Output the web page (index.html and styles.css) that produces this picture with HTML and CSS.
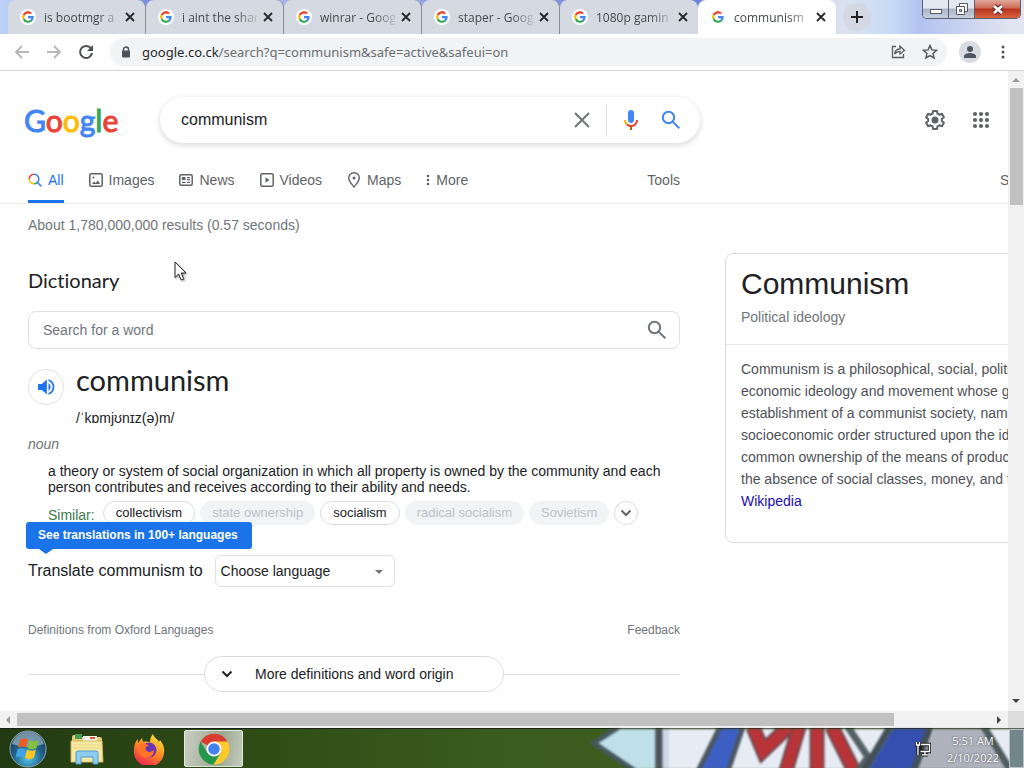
FILE: index.html
```html
<!DOCTYPE html>
<html lang="en">
<head>
    <meta charset="UTF-8">
    <meta name="viewport" content="width=device-width, initial-scale=1.0">
    <title>communism - Google Search</title>
    <link rel="stylesheet" href="styles.css">
</head>
<body>
    <!-- shared icons -->
    <svg class="defs" width="0" height="0" aria-hidden="true">
        <symbol id="g" viewBox="0 0 48 48">
            <path fill="#ea4335" d="M24 9.5c3.5 0 6.700 1.200 9.200 3.600l6.900-6.900C35.900 2.400 30.500 0 24 0 14.600 0 6.500 5.400 2.600 13.200l8 6.200C12.400 13.700 17.700 9.500 24 9.500z"/>
            <path fill="#4285f4" d="M47 24.500c0-1.600-.2-3.100-.4-4.500H24v9h12.900c-.6 3-2.200 5.500-4.700 7.200l7.700 6C44.400 38 47 31.800 47 24.500z"/>
            <path fill="#fbbc05" d="M10.500 28.600c-.5-1.500-.8-3-.8-4.600s.3-3.100.8-4.600l-8-6.200C.9 16.500 0 20.100 0 24s.9 7.500 2.600 10.800l7.900-6.200z"/>
            <path fill="#34a853" d="M24 48c6.500 0 11.900-2.100 15.900-5.800l-7.700-6c-2.200 1.500-4.900 2.300-8.200 2.300-6.300 0-11.600-4.200-13.500-9.900l-8 6.200C6.500 42.600 14.600 48 24 48z"/>
        </symbol>
        <symbol id="x" viewBox="0 0 10 10"><path d="M1 1l8 8M9 1L1 9" stroke="currentColor" stroke-width="1.800"/></symbol>
        <symbol id="search" viewBox="0 0 24 24"><g fill="none" stroke="currentColor" stroke-width="2"><circle cx="9.500" cy="9.500" r="5.700"/><path d="M13.600 13.600l6.700 6.700"/></g></symbol>
        <symbol id="chevron" viewBox="0 0 12 12"><path d="M1.500 3.500L6 8l4.500-4.500" fill="none" stroke="currentColor" stroke-width="2"/></symbol>
    </svg>

    <div class="tabstrip">
        <div class="tabs">
            <div class="tab"><svg class="favicon"><use href="#g"/></svg><span class="tab-title">is bootmgr a</span><button class="tab-close" aria-label="Close tab"><svg><use href="#x"/></svg></button></div>
            <div class="tab"><svg class="favicon"><use href="#g"/></svg><span class="tab-title">i aint the shar</span><button class="tab-close" aria-label="Close tab"><svg><use href="#x"/></svg></button></div>
            <div class="tab"><svg class="favicon"><use href="#g"/></svg><span class="tab-title">winrar - Goog</span><button class="tab-close" aria-label="Close tab"><svg><use href="#x"/></svg></button></div>
            <div class="tab"><svg class="favicon"><use href="#g"/></svg><span class="tab-title">staper - Goog</span><button class="tab-close" aria-label="Close tab"><svg><use href="#x"/></svg></button></div>
            <div class="tab"><svg class="favicon"><use href="#g"/></svg><span class="tab-title">1080p gamin</span><button class="tab-close" aria-label="Close tab"><svg><use href="#x"/></svg></button></div>
            <div class="tab active"><svg class="favicon"><use href="#g"/></svg><span class="tab-title">communism</span><button class="tab-close" aria-label="Close tab"><svg><use href="#x"/></svg></button></div>
        </div>
        <button class="new-tab" aria-label="New tab"><svg width="12" height="12" viewBox="0 0 12 12"><path d="M6 0v12M0 6h12" stroke="#222" stroke-width="2"/></svg></button>
        <div class="window-buttons">
            <button class="win-btn" aria-label="Minimize"><svg width="14" height="14" viewBox="0 0 14 14"><rect x="1.500" y="7.500" width="11" height="4" fill="#fff" stroke="#555a66"/></svg></button>
            <button class="win-btn" aria-label="Restore"><svg width="14" height="14" viewBox="0 0 14 14" fill="#fff" stroke="#555a66"><path d="M4.500 1.500h8v8h-8z"/><path d="M1.500 4.500h8v8h-8z"/><path d="M4.500 7.500h2v2h-2z" fill="#bcc"/></svg></button>
            <button class="win-btn close" aria-label="Close"><svg width="14" height="14" viewBox="0 0 14 14"><path d="M3 4l8 7M11 4l-8 7" stroke="#6b3038" stroke-width="5"/><path d="M3 4l8 7M11 4l-8 7" stroke="#fff" stroke-width="2.500"/></svg></button>
        </div>
    </div>

    <div class="toolbar">
        <button class="tool" aria-label="Back"><svg width="16" height="16" viewBox="0 0 16 16"><path d="M15 8H2M8 2L2 8l6 6" fill="none" stroke="#b4b6b9" stroke-width="1.800"/></svg></button>
        <button class="tool" aria-label="Forward"><svg width="16" height="16" viewBox="0 0 16 16"><path d="M1 8h13M8 2l6 6-6 6" fill="none" stroke="#b4b6b9" stroke-width="1.800"/></svg></button>
        <button class="tool" aria-label="Reload"><svg width="16" height="16" viewBox="0 0 16 16"><path d="M13 4.500A6 6 0 1 0 14 9" fill="none" stroke="#4a4d51" stroke-width="2"/><path d="M15 1v6H9z" fill="#4a4d51"/></svg></button>
        <div class="omnibox">
            <svg width="10" height="12" viewBox="0 0 10 12"><path d="M2.500 5V3.500a2.500 2.500 0 0 1 5 0V5" fill="none" stroke="#4f5358" stroke-width="1.500"/><rect x="1" y="4.500" width="8" height="7" rx="1" fill="#4f5358"/></svg>
            <span class="url"><span class="host">google.co.ck</span>/search?q=communism&amp;safe=active&amp;safeui=on</span>
            <svg width="16" height="16" viewBox="0 0 16 16" fill="none" stroke="#5a5e63" stroke-width="1.300"><path d="M6 2.500H2.500v11h11V10"/><path d="M4.500 10c.5-3.500 2.500-5 5.500-5V2l4.500 4.500L10 10V7.500C7.500 7.500 6 8 4.500 10z"/></svg>
            <svg class="star" width="16" height="16" viewBox="0 0 16 16"><path d="M8 1.500l1.900 4.400 4.700.4-3.600 3.100 1.100 4.700L8 11.600l-4.100 2.500L5 9.400 1.400 6.300l4.700-.4z" fill="none" stroke="#4f5358" stroke-width="1.400"/></svg>
        </div>
        <button class="profile" aria-label="Profile"><svg width="14" height="14" viewBox="0 0 14 14" fill="#4b5563"><circle cx="7" cy="4" r="3"/><path d="M1 13v-2c0-2 4-3 6-3s6 1 6 3v2z"/></svg></button>
        <button class="menu" aria-label="Menu"><svg width="4" height="14" viewBox="0 0 4 14" fill="#4f5358"><circle cx="2" cy="2" r="1.500"/><circle cx="2" cy="7" r="1.500"/><circle cx="2" cy="12" r="1.500"/></svg></button>
    </div>

    <div class="viewport">
        <div class="page">
            <header class="header">
                <a class="logo" href="#" aria-label="Google"><span class="blue">G</span><span class="red">o</span><span class="yellow">o</span><span class="blue">g</span><span class="green">l</span><span class="red">e</span></a>
                <form class="searchbox">
                    <input type="text" aria-label="Search" value="communism">
                    <button type="button" aria-label="Clear"><svg width="16" height="16" viewBox="0 0 16 16"><path d="M1 1l14 14M15 1L1 15" stroke="#70757a" stroke-width="2"/></svg></button>
                    <span class="divider"></span>
                    <button type="button" class="mic" aria-label="Search by voice"><svg width="24" height="24" viewBox="0 0 24 24"><path fill="#4285f4" d="M12 15c1.700 0 3-1.300 3-3V5c0-1.700-1.300-3-3-3S9 3.300 9 5v7c0 1.700 1.300 3 3 3z"/><path fill="#b06000" d="M11 18.900h2V22h-2z"/><path fill="#f4b400" d="M7 12H5c0 1.900.8 3.700 2.100 5l1.400-1.400C7.600 14.700 7 13.400 7 12z"/><path fill="#ea4335" d="M12 17c-1.400 0-2.600-.5-3.500-1.400L7.100 17c1.200 1.300 3 2.100 4.900 2.100 3.900 0 7-3.200 7-7.100h-2c0 2.700-2.200 5-5 5z"/></svg></button>
                    <button type="button" aria-label="Google Search" class="go"><svg width="24" height="24"><use href="#search"/></svg></button>
                </form>
                <div class="header-right">
                    <button aria-label="Settings"><svg width="24" height="24" viewBox="0 0 24 24"><path d="M10 3h4l.5 2.700 1.800 1 2.600-.9 2 3.400-2.100 1.800v2l2.100 1.800-2 3.500-2.600-1-1.800 1-.5 2.700h-4l-.5-2.700-1.800-1-2.600 1-2-3.500 2.100-1.800v-2L3.100 9.200l2-3.400 2.600.9 1.800-1z" fill="none" stroke="#5f6368" stroke-width="2" stroke-linejoin="round"/><circle cx="12" cy="12" r="3.500" fill="#5f6368"/></svg></button>
                    <button aria-label="Google apps"><svg width="18" height="18" viewBox="0 0 18 18" fill="#5f6368"><circle cx="3" cy="3" r="2.100"/><circle cx="9" cy="3" r="2.100"/><circle cx="15" cy="3" r="2.100"/><circle cx="3" cy="9" r="2.100"/><circle cx="9" cy="9" r="2.100"/><circle cx="15" cy="9" r="2.100"/><circle cx="3" cy="15" r="2.100"/><circle cx="9" cy="15" r="2.100"/><circle cx="15" cy="15" r="2.100"/></svg></button>
                </div>
            </header>

            <nav class="nav">
                <div class="nav-main">
                    <a class="selected" href="#"><svg width="14" height="14" viewBox="0 0 14 14" fill="none" stroke-width="1.500"><path d="M1.200 6A4.800 4.800 0 0 1 6 1.200" stroke="#ea4335"/><path d="M6 10.800A4.800 4.800 0 0 1 1.200 6" stroke="#fbbc05"/><path d="M9.400 9.400A4.800 4.800 0 0 1 6 10.800" stroke="#34a853"/><path d="M6 1.200A4.800 4.800 0 0 1 9.400 9.400L13.400 13.400" stroke="#4285f4"/></svg>All</a>
                    <a href="#"><svg width="14" height="14" viewBox="0 0 14 14"><rect x=".8" y=".8" width="12.400" height="12.400" rx="1.500" fill="none" stroke="#5f6368" stroke-width="1.500"/><path d="M3 11l2-2.500L6.500 10 9 7.500l2 3.500z" fill="#5f6368"/><circle cx="4.500" cy="4.500" r="1" fill="#5f6368"/></svg>Images</a>
                    <a href="#"><svg width="14" height="14" viewBox="0 0 14 14"><rect x=".8" y="1.800" width="12.400" height="10.400" rx="1.500" fill="none" stroke="#5f6368" stroke-width="1.500"/><path d="M3 4h3.500v3H3zM8 4h3v1.200H8zM8 6h3v1.200H8zM3 8.700h3.500v1.200H3zM8 8.700h3v1.200H8z" fill="#5f6368"/></svg>News</a>
                    <a href="#"><svg width="14" height="14" viewBox="0 0 14 14"><rect x=".8" y=".8" width="12.400" height="12.400" rx="1.500" fill="none" stroke="#5f6368" stroke-width="1.500"/><path d="M5.500 4.300v5.400L9.500 7z" fill="#5f6368"/></svg>Videos</a>
                    <a href="#"><svg width="14" height="16" viewBox="0 0 14 16"><path d="M7 15C4 11 1.700 9 1.700 6a5.300 5.300 0 0 1 10.600 0c0 3-2.300 5-5.300 9z" fill="none" stroke="#5f6368" stroke-width="1.400"/><circle cx="7" cy="6" r="1.500" fill="#5f6368"/></svg>Maps</a>
                    <a href="#"><svg width="4" height="12" viewBox="0 0 4 12" fill="#5f6368"><circle cx="2" cy="2" r="1.300"/><circle cx="2" cy="6" r="1.300"/><circle cx="2" cy="10" r="1.300"/></svg>More</a>
                    <a class="tools" href="#">Tools</a>
                </div>
                <a href="#">SafeSearch on</a>
            </nav>

            <p class="stats">About 1,780,000,000 results (0.57 seconds)</p>

            <div class="results">
                <main class="dictionary">
                    <h2>Dictionary</h2>
                    <div class="word-search">
                        <input type="text" aria-label="Search for a word" placeholder="Search for a word">
                        <svg width="24" height="24"><use href="#search"/></svg>
                    </div>
                    <div class="word-row">
                        <button class="speaker" aria-label="Listen"><svg width="20" height="20" viewBox="0 0 24 24" fill="#1a73e8"><path d="M2.500 8.500v7H7l6 5.500V3L7 8.500z"/><path d="M15 7.500v9c1.500-.8 2.500-2.500 2.500-4.500S16.500 8.300 15 7.500z"/><path d="M15 2.700v2.200c3 .9 5 3.700 5 7.100s-2 6.200-5 7.100v2.200c4-.9 7-4.700 7-9.300s-3-8.400-7-9.300z"/></svg></button>
                        <div>
                            <h1>communism</h1>
                            <p class="ipa">/ˈkɒmjʊnɪz(ə)m/</p>
                        </div>
                    </div>
                    <p class="pos">noun</p>
                    <div class="sense">
                        <p>a theory or system of social organization in which all property is owned by the community and each person contributes and receives according to their ability and needs.</p>
                        <div class="similar">
                            <span class="similar-label">Similar:</span>
                            <a class="chip" href="#">collectivism</a>
                            <span class="chip off">state ownership</span>
                            <a class="chip" href="#">socialism</a>
                            <span class="chip off">radical socialism</span>
                            <span class="chip off">Sovietism</span>
                            <button class="expand" aria-label="More synonyms"><svg width="12" height="12"><use href="#chevron"/></svg></button>
                        </div>
                    </div>
                    <div class="translate">
                        <div class="tooltip">See translations in 100+ languages</div>
                        <label for="language">Translate communism to</label>
                        <div class="select">
                            <select id="language"><option>Choose language</option></select>
                            <svg width="8" height="4" viewBox="0 0 8 4"><path d="M0 0h8L4 4z" fill="#70757a"/></svg>
                        </div>
                    </div>
                    <div class="source"><a href="#">Definitions from Oxford Languages</a><a href="#">Feedback</a></div>
                    <div class="more">
                        <button><svg width="12" height="12"><use href="#chevron"/></svg>More definitions and word origin</button>
                    </div>
                </main>

                <aside class="panel">
                    <div class="panel-head">
                        <h2>Communism</h2>
                        <p>Political ideology</p>
                    </div>
                    <p class="panel-text">Communism is a philosophical, social, political, and<br>economic ideology and movement whose goal is the<br>establishment of a communist society, namely a<br>socioeconomic order structured upon the ideas of<br>common ownership of the means of production and<br>the absence of social classes, money, and the state.<br><a href="#">Wikipedia</a></p>
                </aside>
            </div>
        </div>
        <div class="vscroll">
            <svg width="8" height="5" viewBox="0 0 8 5"><path d="M4 0l4 4H0z" fill="#999"/></svg>
            <div class="vthumb"></div>
            <svg width="8" height="5" viewBox="0 0 8 5"><path d="M0 0h8L4 4z" fill="#444"/></svg>
        </div>
    </div>
    <div class="hscroll">
        <svg width="5" height="8" viewBox="0 0 5 8"><path d="M4 0v8L0 4z" fill="#999"/></svg>
        <div class="htrack"><div class="hthumb"></div></div>
        <svg width="5" height="8" viewBox="0 0 5 8"><path d="M0 0v8l4-4z" fill="#444"/></svg>
        <div class="corner"></div>
    </div>

    <footer class="taskbar">
        <svg class="wallpaper" width="440" height="40" viewBox="584 0 440 40" aria-hidden="true">
            <path d="M650 0h374v40H650z" fill="#e6ebf4"/>
            <path d="M594 14L622 -4h36v48h-20z" fill="#bfdfe9" stroke="#465760" stroke-width="5"/>
            <path d="M659 -2v44" stroke="#4d555c" stroke-width="7"/>
            <path d="M663 0l6 0v40h-6z" fill="#cdd8e6"/>
            <path d="M722 -2h21l-16 44h-27z" fill="#3d5fc4"/>
            <path d="M720 -2l-22 44M743 -2l-15 44" fill="none" stroke="#4b5660" stroke-width="5"/>
            <path d="M753 -2l10 24L788 -2M799 -2l-13 44M817 -2v44M832 -2l22 44" fill="none" stroke="#6b4951" stroke-width="15"/>
            <path d="M753 -2l10 24L788 -2M799 -2l-13 44M817 -2v44M832 -2l22 44" fill="none" stroke="#b93438" stroke-width="11"/>
            <path d="M848 -2l20 30-10 14" fill="none" stroke="#536166" stroke-width="7"/>
            <path d="M894 -2h36l-18 44h-44z" fill="#354fae"/>
            <path d="M890 -2l-26 44M930 -2l-16 44" stroke="#435057" stroke-width="7"/>
            <path d="M934 0h50l25 40h-91z" fill="#adb2bd"/>
            <path d="M984 -2l27 44" stroke="#4d5c5e" stroke-width="7"/>
        </svg>
        <button class="task start" aria-label="Start">
            <svg width="40" height="38" viewBox="0 0 40 38"><defs><radialGradient id="orb" cx=".5" cy=".75" r=".75"><stop offset="0" stop-color="#55c9ea"/><stop offset=".5" stop-color="#23648f"/><stop offset="1" stop-color="#16324b"/></radialGradient></defs><circle cx="20" cy="19" r="18" fill="url(#orb)" stroke="#8ca9b4"/><path d="M4 14a16.500 16.500 0 0 1 32 0q-16 6-32 0z" fill="#b9d5df" opacity=".55"/><path d="M12 10q4-3 8-.5l-2 8q-4-2-8 .5z" fill="#ee5b24"/><path d="M21.500 10q5 2.500 9 0l-2 8q-4 2.500-9 0z" fill="#85bf3b"/><path d="M9.500 19.500q4-2.500 8 0l-2 8q-4-2-8 0z" fill="#3ea4e5"/><path d="M19 19.500q5 2.500 9 0l-2 8q-4 3-9 .5z" fill="#fcc624"/></svg>
        </button>
        <button class="task" aria-label="Windows Explorer">
            <svg width="34" height="32" viewBox="0 0 34 32"><path d="M2 4q0-2 2-2h6l2 2h18q2 0 2 2v23H2z" fill="#e8cd73"/><path d="M5 1h7v5H5z" fill="#4b9a54"/><path d="M13 3h14v5H13z" fill="#f4f4ec"/><path d="M20 4h5v2h-5z" fill="#d05a45"/><path d="M1 8h31l1 21H1z" fill="#f6e9a4" stroke="#d3b75f"/><path d="M3 12h28M3 15h28" stroke="#e9d583"/><path d="M6 31V20q0-2 2-2h18q2 0 2 2v11h-5v-7H11v7z" fill="#8fcdf0" stroke="#4b9bcf"/></svg>
        </button>
        <button class="task" aria-label="Firefox">
            <svg width="32" height="32" viewBox="0 0 32 32"><defs><linearGradient id="fox" x1=".8" y1="0" x2=".3" y2="1"><stop offset="0" stop-color="#ffe93f"/><stop offset=".5" stop-color="#ff8a1f"/><stop offset="1" stop-color="#ee2255"/></linearGradient></defs><path d="M20 1c1 4 5 5 6 8l1-2c3 4 5 8 4 13A15 15 0 0 1 1 17c0-5 1-8 4-11v4l4-5 1 4c4-1 5 0 7 0 0-3 1-6 3-8z" fill="url(#fox)"/><circle cx="16" cy="17" r="7.500" fill="#6a35b5"/><path d="M5 12c4-3 8-2 11 1-3 0-4 2-3 4 2 3 6 2 8 0 0 6-5 9-10 7-5-1-7-6-6-12z" fill="#ff7428"/></svg>
        </button>
        <button class="task current" aria-label="Google Chrome">
            <svg width="32" height="32" viewBox="0 0 32 32"><path d="M16 16L2.600 8.500A15.500 15.500 0 0 1 29.500 8.500z" fill="#d93c30"/><path d="M16 8.500h13.500A15.500 15.500 0 0 1 15.500 31.500L22.500 20z" fill="#fdc92f"/><path d="M2.600 8.500A15.500 15.500 0 0 0 15.500 31.500L22.500 20H16L9.500 20z" fill="#26964d"/><circle cx="16" cy="16" r="7.500" fill="#fff"/><circle cx="16" cy="16" r="5.800" fill="#4480ee"/></svg>
        </button>
        <div class="tray">
            <svg width="16" height="16" viewBox="0 0 16 16" fill="none"><path d="M6 3.500h8.500v7H5.500zM10 10.500v3M7 13.800h6M1.500 1v3h3V1M3 4v10" stroke="#222" stroke-width="3.500"/><path d="M6 3.500h8.500v7H5.500M10 10.500v3M7 13.800h6M1.500 1v3h3V1M3 4v10" stroke="#fff" stroke-width="1.300"/></svg>
            <div class="clock">5:51 AM<br>2/10/2022</div>
            <button class="show-desktop" aria-label="Show desktop"></button>
        </div>
    </footer>

    <svg class="cursor" width="14" height="20" viewBox="0 0 14 20" aria-hidden="true"><path d="M1 1v15.500l3.600-3.500 2.600 6 2.600-1.100L7.200 12H12z" fill="#fff" stroke="#222"/></svg>
</body>
</html>
```
FILE: styles.css
```css
* {
    box-sizing: border-box;
}
body {
    margin: 0;
    height: 100vh;
    display: flex;
    flex-direction: column;
    overflow: hidden;
    font-family: "Liberation Sans", Arial, sans-serif;
    font-size: 14px;
    color: #202124;
    background-color: #fff;
}
h1, h2, p {
    margin: 0;
    font-weight: normal;
}
a {
    color: inherit;
    text-decoration: none;
}
button {
    display: flex;
    align-items: center;
    justify-content: center;
    padding: 0;
    border: none;
    background: none;
    font: inherit;
    color: inherit;
}
input, select {
    font: inherit;
    color: inherit;
    border: none;
    outline: none;
    background: none;
}
svg {
    display: block;
    flex: none;
}
.defs {
    position: absolute;
}

/* tab strip */
.tabstrip {
    display: flex;
    align-items: flex-start;
    height: 34px;
    padding-left: 8px;
    background: linear-gradient(90deg, #bcd3f6 0, #7b8fe0 146px, #a9b6ea 290px, #6f7fdc 700px, #dce1ef 840px, #c8dcf5 890px, #b3c3f0 920px, #dfe4f0 1010px);
    font-family: "Open Sans", "Noto Sans", sans-serif;
    font-size: 12px;
    color: #45484e;
}
.tabs {
    display: flex;
}
.tab {
    display: flex;
    align-items: center;
    width: 138px;
    height: 34px;
    padding: 0 10px 0 12px;
    background-color: #d5d9e2;
    border-radius: 8px 8px 0 0;
    border-right: 1px solid #8a8e98;
}
.tab:nth-child(5) {
    border-right: none;
}
.tab.active {
    background-color: #fff;
    border-right: none;
}
.favicon {
    width: 16px;
    height: 16px;
    padding: 2px;
    border-radius: 8px;
    background-color: #fff;
}
.tab-title {
    flex: 1;
    min-width: 0;
    margin-left: 8px;
    overflow: hidden;
    white-space: nowrap;
    -webkit-mask-image: linear-gradient(90deg, #000 72%, transparent 105%);
    mask-image: linear-gradient(90deg, #000 72%, transparent 105%);
}
.tab-close {
    width: 10px;
    height: 16px;
    margin-left: 6px;
    color: #26282c;
}
.tab-close svg {
    width: 10px;
    height: 10px;
}
.new-tab {
    width: 28px;
    height: 28px;
    margin: 3px 0 0 7px;
    border-radius: 14px;
    background-color: #d3d8e2;
}
.window-buttons {
    display: flex;
    margin: 0 3px 0 auto;
    border: 1px solid #5b616e;
    border-top: none;
    border-radius: 0 0 5px 5px;
    overflow: hidden;
}
.win-btn {
    width: 26px;
    height: 18px;
    background: linear-gradient(#e4e8f0 45%, #aab2c6 50%, #c9d0e0);
    border-right: 1px solid #5b616e;
}
.win-btn.close {
    width: 45px;
    background: linear-gradient(#e0a79a 0, #cd6b55 45%, #b8321b 50%, #d8653f);
    border-right: none;
}

/* toolbar */
.toolbar {
    display: flex;
    align-items: center;
    height: 37px;
    padding: 0 19px 0 14px;
    border-bottom: 1px solid #d3d5d8;
    background-color: #fff;
}
.tool {
    width: 16px;
    margin-right: 16px;
}
.omnibox {
    flex: 1;
    display: flex;
    align-items: center;
    height: 28px;
    padding: 0 9px 0 11px;
    border-radius: 14px;
    background-color: #f1f3f4;
    font-family: "Noto Sans", "Open Sans", sans-serif;
    font-size: 13px;
    color: #6a6e73;
}
.url {
    flex: 1;
    margin-left: 11px;
}
.host {
    color: #25272a;
}
.star {
    margin-left: 16px;
}
.profile {
    width: 22px;
    height: 22px;
    margin: 0 20px 0 12px;
    border-radius: 11px;
    background-color: #d9dce0;
}

/* page */
.viewport {
    flex: 1;
    min-height: 0;
    display: flex;
}
.page {
    flex: 1;
    min-width: 0;
    overflow: hidden;
}
.header {
    display: flex;
    align-items: center;
    padding: 26px 18px 0 24px;
}
.logo {
    width: 136px;
    font-family: Lato, sans-serif;
    font-size: 30px;
    line-height: 40px;
    -webkit-text-stroke: 1px;
}
.blue { color: #4285f4; }
.red { color: #ea4335; }
.yellow { color: #fbbc05; }
.green { color: #34a853; }
.searchbox {
    display: flex;
    align-items: center;
    width: 540px;
    height: 46px;
    padding: 0 17px 0 19px;
    border-radius: 23px;
    box-shadow: 0 2px 5px 1px rgba(64, 60, 67, 0.16);
}
.searchbox input {
    flex: 1;
    min-width: 0;
    font-size: 16px;
}
.divider {
    width: 1px;
    height: 32px;
    margin: 0 12px 0 16px;
    background-color: #dadce0;
}
.go {
    margin-left: 16px;
    color: #4285f4;
}
.header-right {
    display: flex;
    align-items: center;
    gap: 25px;
    margin-left: auto;
}
.nav {
    display: grid;
    grid-template-columns: 652px 130px;
    column-gap: 320px;
    height: 46px;
    margin-top: 15px;
    padding-left: 28px;
    border-bottom: 1px solid #ebebeb;
    color: #5f6368;
}
.nav-main {
    display: flex;
    gap: 25px;
}
.nav a {
    display: flex;
    align-items: center;
    gap: 6px;
    height: 45px;
    padding-top: 1px;
    border-bottom: 3px solid transparent;
    white-space: nowrap;
}
.nav a.selected {
    color: #1a73e8;
    border-color: #1a73e8;
}
.nav .tools {
    margin-left: auto;
}
.stats {
    margin: 11px 0 18px 28px;
    line-height: 20px;
    color: #70757a;
}
.results {
    display: grid;
    grid-template-columns: 652px 370px;
    column-gap: 45px;
    align-items: start;
    padding-left: 28px;
}

/* dictionary */
.dictionary h2 {
    margin-top: 13px;
    font-family: Lato, sans-serif;
    font-size: 20px;
    line-height: 28px;
    font-variant-ligatures: none;
}
.word-search {
    display: flex;
    align-items: center;
    height: 38px;
    margin-top: 17px;
    padding: 0 10px 0 14px;
    border: 1px solid #dfe1e5;
    border-radius: 8px;
    color: #70757a;
}
.word-search input {
    flex: 1;
    padding: 0;
}
.word-search input::placeholder {
    color: #70757a;
}
.word-row {
    display: flex;
    gap: 12px;
    margin-top: 15px;
}
.speaker {
    width: 36px;
    height: 36px;
    margin-top: 5px;
    border: 1px solid #dfe1e5;
    border-radius: 18px;
}
.dictionary h1 {
    font-family: Lato, sans-serif;
    font-size: 29px;
    line-height: 32px;
}
.ipa {
    margin-top: 12px;
    line-height: 20px;
}
.pos {
    margin-top: 6px;
    line-height: 20px;
    font-style: italic;
    color: #70757a;
}
.sense {
    margin-top: 9px;
    padding-left: 20px;
    line-height: 16px;
}
.similar {
    display: flex;
    align-items: center;
    gap: 5px;
    margin-top: 6px;
}
.similar-label {
    margin-right: 3px;
    padding-top: 4px;
    color: #3c7a4b;
}
.chip {
    height: 24px;
    padding: 0 12px;
    border: 1px solid #dadce0;
    border-radius: 12px;
    font-size: 13px;
    line-height: 22px;
    white-space: nowrap;
}
.chip.off {
    padding: 0 11px;
    border-color: #f1f3f4;
    background-color: #f1f3f4;
    color: #bdc1c6;
}
.expand {
    width: 24px;
    height: 24px;
    border: 1px solid #dadce0;
    border-radius: 12px;
    color: #5f6368;
}
.translate {
    position: relative;
    display: flex;
    align-items: center;
    gap: 12px;
    margin-top: 30px;
}
.translate label {
    font-size: 16px;
}
.tooltip {
    position: absolute;
    top: -33px;
    left: -2px;
    padding: 0 14px 0 12px;
    border-radius: 3px;
    background-color: #1a73e8;
    color: #fff;
    font-size: 12px;
    font-weight: bold;
    line-height: 27px;
}
.tooltip::after {
    content: "";
    position: absolute;
    top: 100%;
    left: 13px;
    border: 7px solid transparent;
    border-top: 5px solid #1a73e8;
    border-bottom: none;
}
.select {
    position: relative;
}
.select select {
    width: 180px;
    height: 32px;
    padding: 0 5px;
    border: 1px solid #dfe1e5;
    border-radius: 6px;
    appearance: none;
}
.select svg {
    position: absolute;
    right: 12px;
    top: 15px;
}
.source {
    display: flex;
    justify-content: space-between;
    margin-top: 33px;
    font-size: 12px;
    line-height: 20px;
    color: #70757a;
}
.more {
    display: flex;
    align-items: center;
    margin-top: 16px;
}
.more::before, .more::after {
    content: "";
    flex: 1;
    height: 1px;
    background-color: #dadce0;
}
.more button {
    width: 300px;
    height: 36px;
    padding-left: 16px;
    justify-content: flex-start;
    gap: 22px;
    border: 1px solid #dadce0;
    border-radius: 18px;
}

/* knowledge panel */
.panel {
    border: 1px solid #dadce0;
    border-radius: 8px;
    padding-bottom: 30px;
}
.panel-head {
    padding: 12px 15px 16px;
    border-bottom: 1px solid #e8eaed;
}
.panel-head h2 {
    font-size: 30px;
    line-height: 36px;
}
.panel-head p {
    margin-top: 4px;
    line-height: 22px;
    color: #70757a;
}
.panel-text {
    padding: 13px 15px 0;
    line-height: 22px;
    white-space: nowrap;
    color: #4d5156;
}
.panel-text a {
    color: #1a0dab;
}

/* scrollbars */
.vscroll {
    width: 16px;
    padding: 7px 0;
    display: flex;
    flex-direction: column;
    align-items: center;
    background-color: #f1f1f1;
}
.vthumb {
    width: 13px;
    height: 117px;
    margin: 5px 0 auto;
    background-color: #c1c1c1;
}
.hscroll {
    display: flex;
    align-items: center;
    height: 17px;
    padding-left: 6px;
    background-color: #f1f1f1;
}
.htrack {
    flex: 1;
    margin: 0 6px;
}
.hthumb {
    width: 90%;
    height: 13px;
    background-color: #c1c1c1;
}
.corner {
    width: 16px;
    height: 17px;
    margin-left: 6px;
    background-color: #dcdcdc;
}

/* taskbar */
.taskbar {
    position: relative;
    display: flex;
    align-items: center;
    height: 40px;
    border-top: 1px solid #1b2117;
    background: linear-gradient(90deg, #223a12, #2f4c17 250px, #3a5c1e 500px, #456427);
}
.wallpaper {
    position: absolute;
    right: 0;
    top: 0;
    filter: blur(1px);
}
.task {
    width: 62px;
    height: 39px;
}
.task.start {
    width: 56px;
}
.task.current {
    width: 59px;
    height: 37px;
    margin-left: 4px;
    border: 1px solid #e3e8df;
    border-radius: 2px;
    background: linear-gradient(100deg, #c9cfc3, #9aa68f 60%, #c4ccbd);
}
.tray {
    position: relative;
    display: flex;
    align-items: center;
    height: 39px;
    margin-left: auto;
    color: #fff;
}
.clock {
    width: 60px;
    margin: 0 6px 0 12px;
    text-align: center;
    font-family: "Open Sans", "Noto Sans", sans-serif;
    font-size: 11px;
    line-height: 17px;
    text-shadow: 0 0 2px #333;
}
.show-desktop {
    width: 15px;
    height: 39px;
    border: 1px solid #b9c4c8;
    background-color: #73868c;
}

.cursor {
    position: absolute;
    left: 174px;
    top: 261px;
    filter: drop-shadow(1px 1px 1px rgba(0, 0, 0, 0.4));
}
```
